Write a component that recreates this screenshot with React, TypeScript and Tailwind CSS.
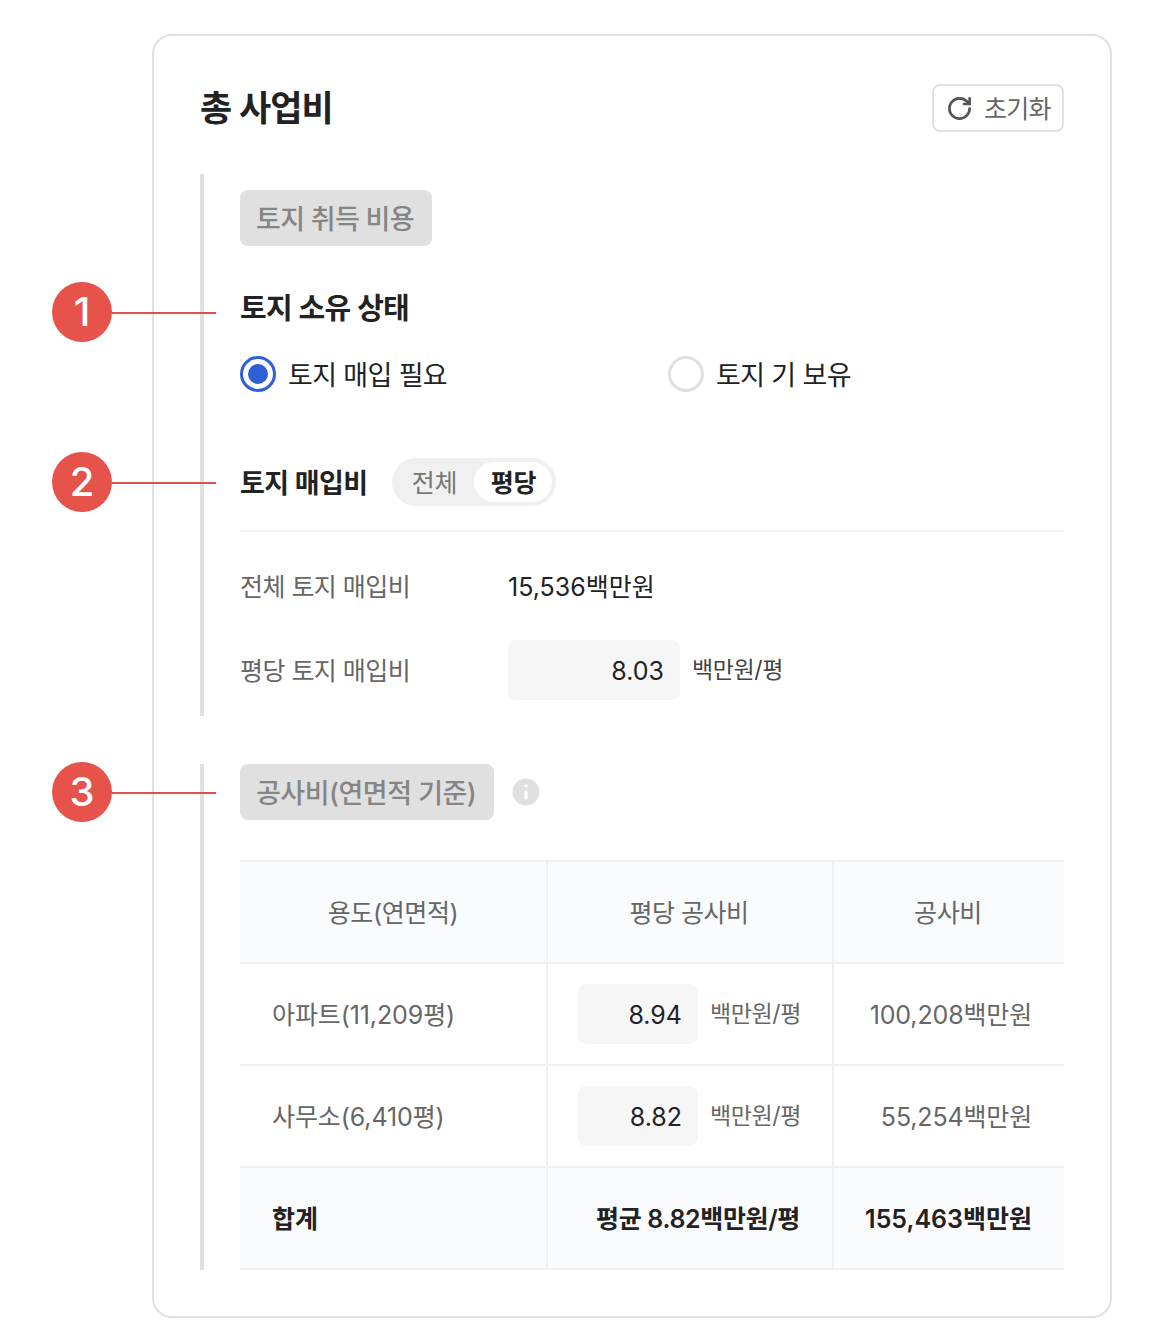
import { RotateCw, Info } from "lucide-react";

const FONT = "font-['Inter','Noto_Sans_CJK_KR',sans-serif]";

const MARKERS = [
  { n: 1, className: "top-[282px]" },
  { n: 2, className: "top-[452px]" },
  { n: 3, className: "top-[762px]" },
];

const ROWS = [
  { name: "아파트(11,209평)", unit: "8.94", cost: "100,208백만원" },
  { name: "사무소(6,410평)", unit: "8.82", cost: "55,254백만원" },
];

function Marker({ n, className }: { n: number; className: string }) {
  return (
    <div className={`absolute left-[52px] z-10 flex items-center ${className}`}>
      <span className="flex h-[60px] w-[60px] items-center justify-center rounded-full bg-[#e5534b] text-[40px] leading-none font-medium text-white">
        {n}
      </span>
      <span className="mt-[2px] h-[2px] w-[104px] bg-[#d9534f]" />
    </div>
  );
}

function SectionTag({ children, className }: { children: React.ReactNode; className: string }) {
  return (
    <div
      className={`inline-flex h-14 items-center rounded-lg bg-[#e0e0e0] pt-1 pl-4 text-[27px] font-medium text-[#858585] ${className}`}
    >
      {children}
    </div>
  );
}

function Radio({ label, checked }: { label: string; checked?: boolean }) {
  return (
    <div className="flex h-9 items-center gap-3">
      <span
        className={`flex h-9 w-9 items-center justify-center rounded-full border-[3px] ${
          checked ? "border-[#2f5fd7]" : "border-[#e0e0e0]"
        }`}
      >
        {checked && <span className="h-5 w-5 rounded-full bg-[#2f5fd7]" />}
      </span>
      <span className="pt-1 text-[27px] tracking-[-0.65px] text-[#222]">{label}</span>
    </div>
  );
}

export default function App() {
  return (
    <div className={`relative h-[1342px] w-[1156px] bg-white ${FONT}`}>
      {MARKERS.map((m) => (
        <Marker key={m.n} {...m} />
      ))}

      <div className="absolute top-[34px] left-[152px] h-[1284px] w-[960px] rounded-[20px] border-2 border-[#e0e0e0] px-[46px] pt-[48px]">
        <div className="flex items-center justify-between">
          <h1 className="text-[35px] leading-[46px] font-semibold tracking-[-1px] text-[#222]">총 사업비</h1>
          <button className="flex h-12 w-[132px] items-center gap-[11px] rounded-lg border-2 border-[#e0e0e0] pl-[12px] text-[25px] tracking-[-0.7px] text-[#666]">
            <RotateCw size={27} strokeWidth={2.4} className="text-[#555]" />
            <span className="pt-1">초기화</span>
          </button>
        </div>

        <section className="mt-[42px] h-[542px] border-l-4 border-[#e0e0e0] pt-4 pl-9">
          <SectionTag className="w-[192px] tracking-[-0.7px]">토지 취득 비용</SectionTag>
          <h2 className="mt-[43px] text-[29px] leading-[40px] font-semibold tracking-[-0.7px] text-[#222]">
            토지 소유 상태
          </h2>
          <div className="mt-[27px] grid grid-cols-[428px_1fr]">
            <Radio label="토지 매입 필요" checked />
            <Radio label="토지 기 보유" />
          </div>

          <div className="mt-[66px] flex h-12 items-center gap-[25px]">
            <h2 className="pt-1 text-[27px] font-semibold tracking-[-0.6px] text-[#222]">토지 매입비</h2>
            <div className="flex h-12 w-[164px] items-center rounded-full bg-[#f0f0f0] p-1">
              <span className="flex-1 pt-1 pr-[2px] text-center text-[25px] tracking-[-0.3px] text-[#777]">전체</span>
              <span className="flex h-10 w-[78px] items-center justify-center rounded-full bg-white pt-1 text-[25px] font-semibold tracking-[-0.3px] text-[#222]">
                평당
              </span>
            </div>
          </div>
          <div className="mt-6 h-[2px] bg-[#f0f0f0]" />

          <div className="mt-[37px] flex h-[38px] items-center text-[25px]">
            <span className="w-[268px] tracking-[-0.55px] text-[#666]">전체 토지 매입비</span>
            <span className="text-[#222]">15,536백만원</span>
          </div>
          <div className="mt-[33px] flex items-center text-[25px]">
            <span className="w-[268px] pt-1 tracking-[-0.55px] text-[#666]">평당 토지 매입비</span>
            <span className="flex h-[60px] w-[172px] items-center justify-end rounded-lg bg-[#f6f6f6] pt-1 pr-4 text-[#222]">
              8.03
            </span>
            <span className="ml-3 text-[23px] tracking-[-0.4px] text-[#444]">백만원/평</span>
          </div>
        </section>

        <section className="mt-12 h-[506px] border-l-4 border-[#e0e0e0] pl-9">
          <div className="flex items-center gap-[14px]">
            <SectionTag className="w-[254px] tracking-[-0.5px]">공사비(연면적 기준)</SectionTag>
            <Info size={36} fill="#e0e0e0" stroke="#ffffff" strokeWidth={2} />
          </div>

          <table className="mt-10 w-[824px] table-fixed border-collapse text-[25px]">
            <colgroup>
              <col className="w-[307px]" />
              <col className="w-[286px]" />
              <col />
            </colgroup>
            <thead>
              <tr className="h-[102px] border-y-2 border-[#f0f0f0] bg-[#fafbfd] text-[#666]">
                <th className="pt-1 font-normal tracking-[-0.4px]">용도(연면적)</th>
                <th className="border-x-2 border-[#f0f0f0] pt-1 pr-[2px] font-normal tracking-[-0.5px]">평당 공사비</th>
                <th className="pt-1 pr-[2px] font-normal tracking-[-0.3px]">공사비</th>
              </tr>
            </thead>
            <tbody>
              {ROWS.map((row) => (
                <tr key={row.name} className="h-[102px] border-b-2 border-[#f0f0f0] text-[#666]">
                  <td className="pt-1 pl-8 tracking-[-0.1px]">{row.name}</td>
                  <td className="border-x-2 border-[#f0f0f0] pl-[30px]">
                    <div className="flex items-center">
                      <span className="flex h-[60px] w-[120px] items-center justify-end rounded-lg bg-[#f6f6f6] pt-1 pr-4 text-[#222]">
                        {row.unit}
                      </span>
                      <span className="ml-3 text-[23px] tracking-[-0.4px]">백만원/평</span>
                    </div>
                  </td>
                  <td className="pt-1 pr-8 text-right tracking-[-0.15px]">{row.cost}</td>
                </tr>
              ))}
              <tr className="h-[102px] border-b-2 border-[#f0f0f0] bg-[#fafbfd] font-semibold text-[#222]">
                <td className="pt-1 pl-8">합계</td>
                <td className="border-x-2 border-[#f0f0f0] pt-1 pr-8 text-right tracking-[-0.35px]">
                  평균 8.82백만원/평
                </td>
                <td className="pt-1 pr-8 text-right">155,463백만원</td>
              </tr>
            </tbody>
          </table>
        </section>
      </div>
    </div>
  );
}
